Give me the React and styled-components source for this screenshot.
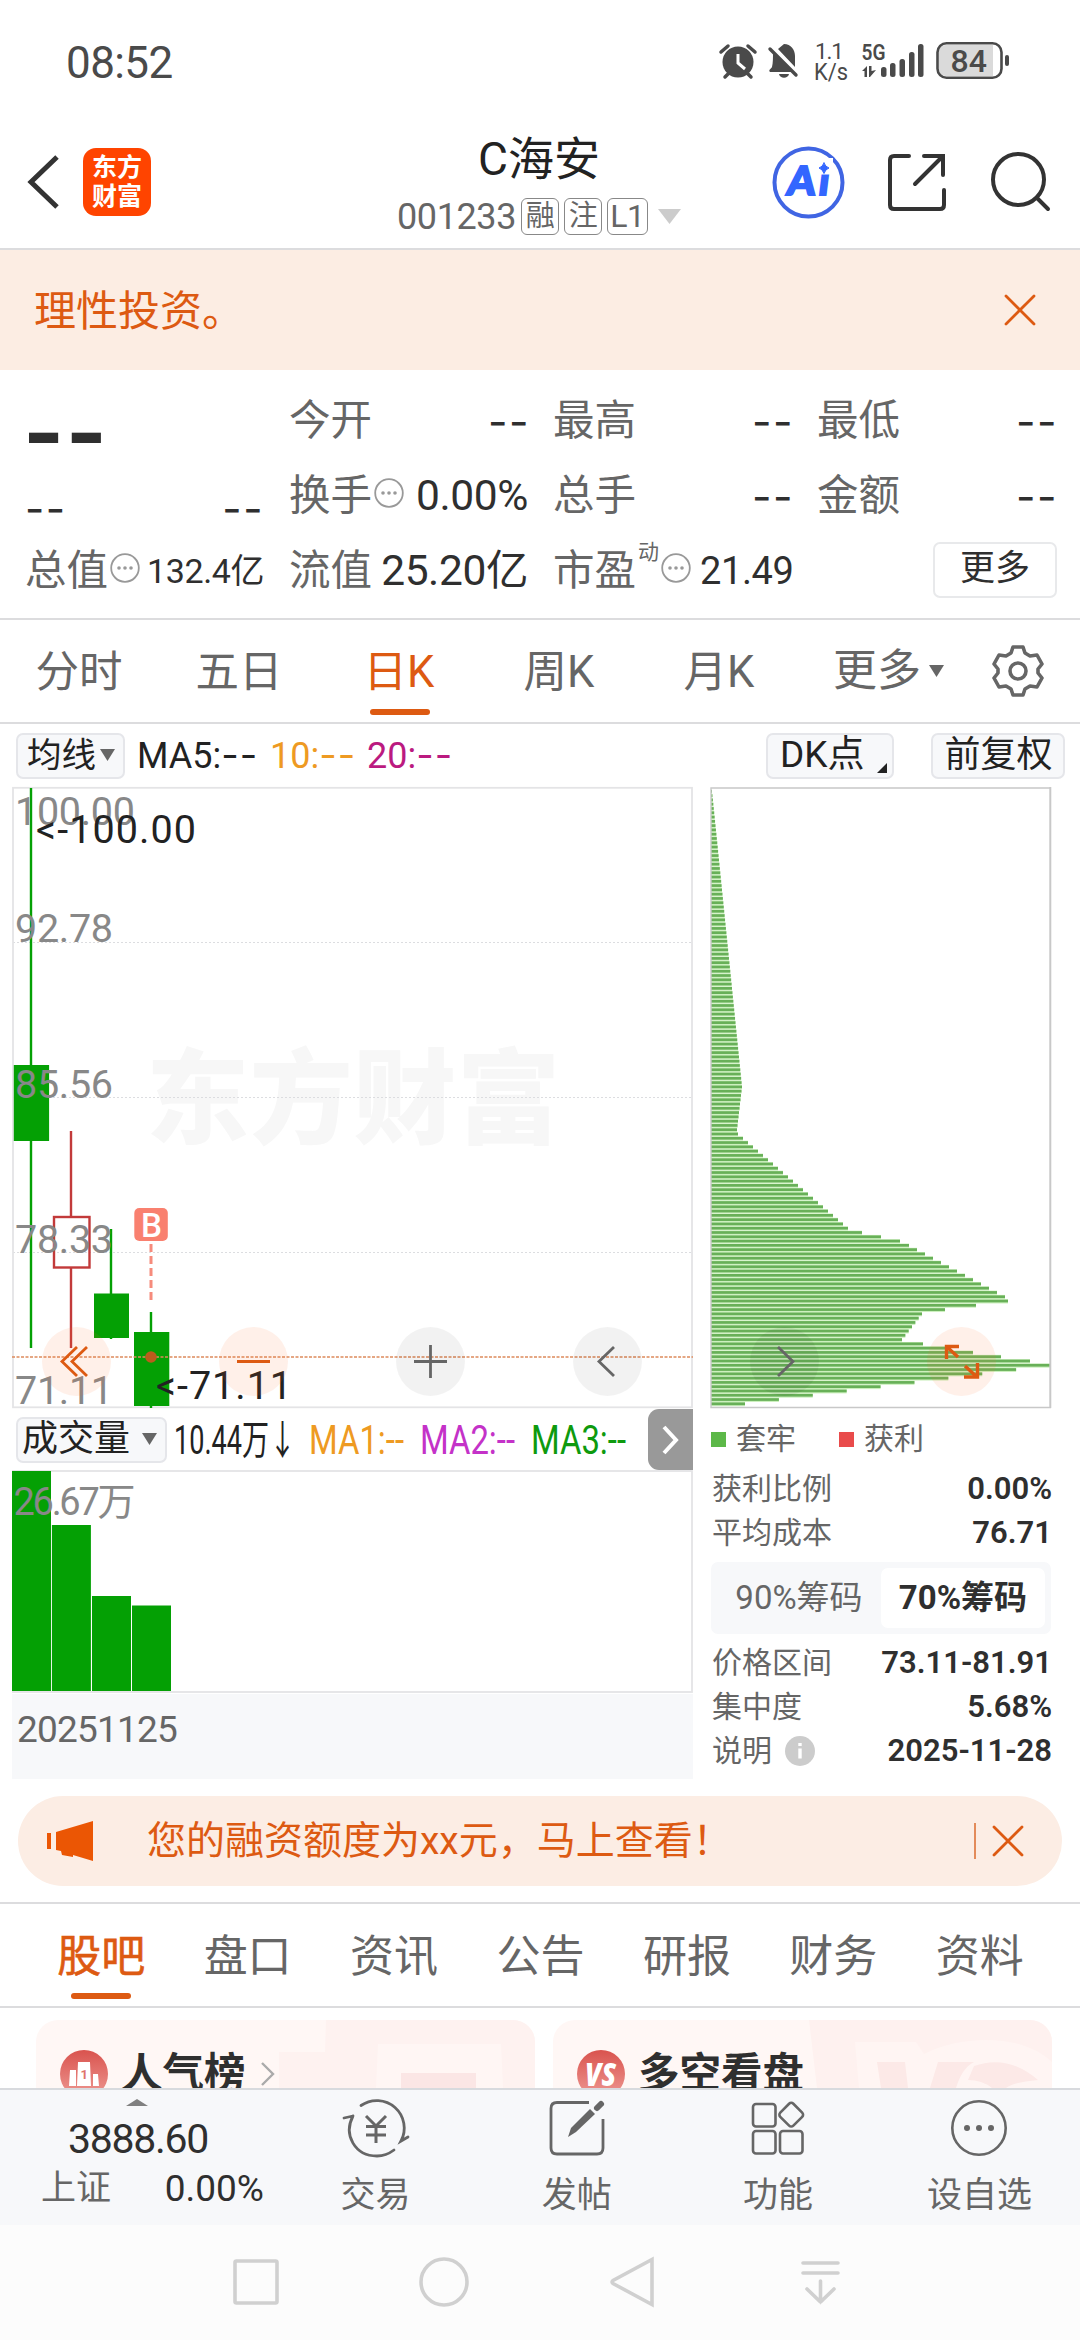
import React, { useState } from 'react';
import styled, { createGlobalStyle, css } from 'styled-components';

const orange = '#dd5a12';
const dark = '#2f2f2f';
const grey = '#666';
const green = '#04a004';

const GlobalStyle = createGlobalStyle`
    * {
        box-sizing: border-box;
    }
    body {
        margin: 0;
        background: #fff;
        font-family: Roboto, "Noto Sans CJK SC", sans-serif;
        color: ${dark};
    }
    svg {
        display: block;
        flex: none;
        overflow: visible;
    }
    svg text {
        white-space: pre;
    }
`;

//Data
const quotes = [
    { label: '今开', value: '--' },
    { label: '最高', value: '--' },
    { label: '最低', value: '--' },
    { label: '换手', value: '0.00%', info: true },
    { label: '总手', value: '--' },
    { label: '金额', value: '--' },
];

const periods = ['分时', '五日', '日K', '周K', '月K'];
const sections = ['股吧', '盘口', '资讯', '公告', '研报', '财务', '资料'];

const priceLabels = [
    { text: '100.00', y: 825 },
    { text: '92.78', y: 942 },
    { text: '85.56', y: 1098 },
    { text: '78.33', y: 1253 },
    { text: '71.11', y: 1404 },
];

const volumes = [
    { x: 12, width: 39, y: 1471 },
    { x: 51.9, width: 39, y: 1525 },
    { x: 92, width: 39, y: 1596 },
    { x: 132, width: 39, y: 1605.5 },
];

//Chip distribution, [row, length], rows between two points are interpolated
const chipPoints = [
    [0, 1], [69, 31], [79, 26], [80, 27], [81, 32], [102, 137], [103, 151], [104, 170],
    [105, 189], [106, 198], [118, 294], [119, 297], [120, 265], [121, 234], [122, 211],
    [128, 191], [129, 212], [130, 234], [131, 262], [132, 290], [133, 319], [134, 339],
    [143, 34],
];

const chipRows = [];
for (let i = 1; i < chipPoints.length; i++) {
    const [r0, l0] = chipPoints[i - 1];
    const [r1, l1] = chipPoints[i];
    for (let r = r0; r < r1; r++) {
        chipRows.push(l0 + ((l1 - l0) * (r - r0)) / (r1 - r0));
    }
}
chipRows.push(34);

const App = () => {
    return (
        <Phone>
            <GlobalStyle />
            <StatusBar />
            <Header />
            <RiskBanner>
                <span>理性投资。</span>
                <CloseIcon />
            </RiskBanner>
            <Quotes />
            <PeriodTabs />
            <ChartArea />
            <Notice>
                <svg width="46" height="40" viewBox="0 0 46 40">
                    <path d="M0 12h4v16H0zM9 11 46 0v40L26 34v2l-11-2-1-4-5-1z" fill="#eb5604" />
                </svg>
                <NoticeText>您的融资额度为xx元，马上查看！</NoticeText>
                <NoticeLine />
                <CloseIcon />
            </Notice>
            <SectionTabs />
            <Cards />
            <Toolbar />
            <NavBar />
        </Phone>
    );
};

const CloseIcon = () => (
    <svg width="32" height="32" viewBox="0 0 32 32" stroke={orange} strokeWidth="2.8" strokeLinecap="round">
        <path d="M2 2l28 28M30 2 2 30" />
    </svg>
);

//Status bar
const StatusBar = () => (
    <Status>
        <Clock>08:52</Clock>
        <svg width="292" height="40" viewBox="719 41 292 40" fill="#4a4a4a">
            <g>
                <circle cx="738" cy="62" r="15.5" />
                <path d="M721 52l7-6M755 52l-7-6M725 77l4-4M751 77l-4-4" stroke="#4a4a4a" strokeWidth="3.5" strokeLinecap="round" />
                <path d="M738 54v9l7 6" fill="none" stroke="#fff" strokeWidth="3" />
            </g>
            <g>
                <path d="M773 52l19 20h-22c-2-2 1-3 2-5 1-4 1-10 1-15z" />
                <path d="M778 49c2-2 4-3 6-5 7 0 11 6 11 12v11z" />
                <path d="M779 74h10c-1 5-9 5-10 0z" />
                <path d="M770 49l26 26" stroke="#4a4a4a" strokeWidth="3.4" strokeLinecap="round" />
            </g>
            <text x="815" y="59" fontSize="22.5" textLength="29">1.1</text>
            <text x="814" y="80" fontSize="23" textLength="34" lengthAdjust="spacingAndGlyphs">K/s</text>
            <text x="861.5" y="59.5" fontSize="22" fontWeight="600" textLength="24" lengthAdjust="spacingAndGlyphs">5G</text>
            <path d="M862 71l5-5v11h-2.500v-6zM869 66h2.500v5l4.500-1-6 7h-1z" />
            <rect x="881" y="67" width="5.500" height="10" rx="2.500" />
            <rect x="890" y="63" width="5.500" height="14" rx="2.500" />
            <rect x="899.500" y="59" width="5.500" height="18" rx="2.500" />
            <rect x="909" y="52" width="5.500" height="25" rx="2.500" />
            <rect x="918" y="44" width="5.500" height="33" rx="2.500" />
            <path d="M946 45h47v31h-47q-7 0-7-7V52q0-7 7-7z" fill="#dadada" />
            <rect x="937.500" y="43.300" width="64" height="34.500" rx="9" fill="none" stroke="#4a4a4a" strokeWidth="2.600" />
            <rect x="1005" y="55" width="4" height="11" rx="2" />
            <text x="950.500" y="72" fontSize="32" fontWeight="500">84</text>
        </svg>
    </Status>
);

//Header
const Header = () => (
    <HeaderBar>
        <HeaderSide>
            <svg width="32" height="54" viewBox="0 0 32 54" fill="none" stroke="#333" strokeWidth="5">
                <path d="M30 2 4 27l26 25" />
            </svg>
            <Logo>
                <span>东方</span>
                <span>财富</span>
            </Logo>
        </HeaderSide>
        <HeaderTitle>
            <StockName>C海安</StockName>
            <StockCode>
                <span>001233</span>
                <Tag>融</Tag>
                <Tag>注</Tag>
                <Tag $wide>L1</Tag>
                <svg width="23" height="15" viewBox="0 0 23 15">
                    <path d="M0 0h23L11.500 15z" fill="#ccc" />
                </svg>
            </StockCode>
        </HeaderTitle>
        <svg width="280" height="76" viewBox="771 144 280 76" fill="none" strokeLinecap="round">
            <circle cx="808.500" cy="182.500" r="34" stroke="#4065e3" strokeWidth="4" />
            <g transform="translate(786 195) skewX(-7)">
                <text x="0" y="0" fontSize="40" fontFamily="Lato" fontWeight="900" fill="#3366ff" stroke="#3366ff" strokeWidth="2" textLength="42">Ai</text>
            </g>
            <path d="M818 158h15v16.500h-15z" fill="#fff" />
            <path d="M824 163q1.500 4 5 5-3.500 1-5 5.500-1.500-4.500-5-5.500 3.500-1 5-5z" fill="#3366ff" stroke="#3366ff" />
            <path d="M909 156h-15q-4 0-4 4v45q0 4 4 4h46q4 0 4-4v-15M924 156h19v19M941 158l-26 26" stroke="#333" strokeWidth="4" />
            <circle cx="1018.500" cy="179.500" r="25.500" stroke="#333" strokeWidth="4" />
            <path d="M1037 198l11 11" stroke="#333" strokeWidth="4" />
        </svg>
    </HeaderBar>
);

//Quotes
const InfoDots = () => (
    <svg width="30" height="30" viewBox="0 0 30 30" fill="#999">
        <circle cx="15" cy="15" r="13.800" fill="none" stroke="#999" strokeWidth="1.800" />
        <circle cx="9" cy="15" r="1.800" />
        <circle cx="15" cy="15" r="1.800" />
        <circle cx="21" cy="15" r="1.800" />
    </svg>
);

const Quotes = () => (
    <QuotePanel>
        <Price>--</Price>
        {quotes.slice(0, 3).map((quote) => (
            <Quote key={quote.label} {...quote} />
        ))}
        <Change>
            <span>--</span>
            <span>--</span>
        </Change>
        {quotes.slice(3).map((quote) => (
            <Quote key={quote.label} {...quote} />
        ))}
        <QuoteCell>
            <QuoteLabel>总值</QuoteLabel>
            <InfoDots />
            <QuoteValue $small>132.4亿</QuoteValue>
        </QuoteCell>
        <QuoteCell>
            <QuoteLabel>流值</QuoteLabel>
            <QuoteValue>25.20亿</QuoteValue>
        </QuoteCell>
        <QuoteCell>
            <QuoteLabel>市盈</QuoteLabel>
            <Sup>动</Sup>
            <InfoDots />
            <QuoteValue $ratio>21.49</QuoteValue>
        </QuoteCell>
        <MoreButton>更多</MoreButton>
    </QuotePanel>
);

const Quote = ({ label, value, info }) => (
    <QuoteCell>
        <QuoteLabel>{label}</QuoteLabel>
        {info && <InfoDots />}
        <QuoteValue $dash={value === '--'}>{value}</QuoteValue>
    </QuoteCell>
);

//Period tabs
const PeriodTabs = () => {
    const [active, setActive] = useState('日K');
    return (
        <PeriodBar>
            {periods.map((name) => (
                <Period key={name} $active={name === active} onClick={() => setActive(name)}>
                    {name}
                </Period>
            ))}
            <PeriodMore>
                更多
                <Down />
            </PeriodMore>
            <svg width="54" height="54" viewBox="0 0 54 54" fill="none" stroke={grey} strokeWidth="3.600" strokeLinejoin="round">
                <path d="M22 3h10l2 6 5 3 7-1 5 9-4 5v4l4 5-5 9-7-1-5 3-2 6H22l-2-6-5-3-7 1-5-9 4-5v-4l-4-5 5-9 7 1 5-3z" />
                <circle cx="27" cy="27" r="8" />
            </svg>
        </PeriodBar>
    );
};

//Charts
const KLine = () => (
    <svg width="681" height="622" viewBox="12 787 681 622">
        <text x="146" y="1136" fontSize="103" fontWeight="900" fill="#f7f7f7" textLength="414">东方财富</text>
        <g stroke="#dcdde0" strokeDasharray="2 2">
            <path d="M13 942.500h679M13 1097.500h679M13 1252.500h679" />
        </g>
        <rect x="13" y="787.800" width="679" height="619.500" fill="none" stroke="#e4e4e6" strokeWidth="1.800" />
        <g fill={green} stroke={green}>
            <path d="M31 788v560M111 1229v110M151 1312v96" strokeWidth="2.400" />
            <path d="M13.800 1065h35.300v76H13.800zM94 1293.500h35v44.500H94zM134 1332h35.300v74H134z" stroke="none" />
        </g>
        <g fill="none" stroke="#c23a3a" strokeWidth="2.400">
            <path d="M71 1131v86M71 1268v80" />
            <rect x="54" y="1217" width="35.500" height="50.500" />
        </g>
        <path d="M12 1357h681" stroke="#dd8a5c" strokeWidth="1.600" strokeDasharray="3 1.500" />
        <circle cx="151" cy="1357" r="5.800" fill="#bb5c1c" />
        <rect x="134.300" y="1208" width="33.500" height="33" rx="5" fill="#f9806f" />
        <text x="141" y="1237" fontSize="34" fontWeight="500" fill="#fff" textLength="21" lengthAdjust="spacingAndGlyphs">B</text>
        <path d="M151 1244v57" stroke="#f68b7c" strokeWidth="3" strokeDasharray="8 4" />
        <g fontSize="39.500" fill="#888" letterSpacing="-0.3">
            {priceLabels.map((label) => (
                <text key={label.text} x="15" y={label.y}>{label.text}</text>
            ))}
        </g>
        <g fontSize="39.500" fill="#222">
            <text x="36" y="843" textLength="160">&lt;-100.00</text>
            <text x="156" y="1399" textLength="136">&lt;-71.11</text>
        </g>
    </svg>
);

const Chips = () => (
    <svg width="342" height="622" viewBox="710 787 342 622">
        {chipRows.map((length, i) => (
            <g key={i}>
                <rect x="711" y={789.5 + i * 4.283} width={length} height="4.300" fill="#cdf0bf" />
                <rect x="711" y={790 + i * 4.283} width={length} height="2.700" fill="#68b058" />
            </g>
        ))}
        <path d="M1051 788H711v619.500h340" fill="none" stroke="#c8c8c8" strokeWidth="1.400" />
        <path d="M1050.300 787v621" stroke="#c8c8c8" strokeWidth="2" />
    </svg>
);

const Volume = () => (
    <svg width="681" height="223" viewBox="12 1470 681 223">
        <rect x="13" y="1471" width="679" height="221" fill="none" stroke="#e4e4e6" strokeWidth="1.800" />
        {volumes.map((bar) => (
            <rect key={bar.x} x={bar.x} y={bar.y} width={bar.width} height={1691 - bar.y} fill={green} />
        ))}
        <text x="13.500" y="1514.500" fontSize="38" fill="#888" textLength="122">26.67万</text>
    </svg>
);

const Down = () => (
    <svg width="15" height="12" viewBox="0 0 15 12">
        <path d="M0 0h15L7.500 12z" fill={grey} />
    </svg>
);

const ChartArea = () => (
    <>
        <ChartHead>
            <Pill $width={109}>均线<Down /></Pill>
            <Average $color="#222" $width={133}>MA5:<Dash>--</Dash></Average>
            <Average $color="#ee9a22" $width={97}>10:<Dash>--</Dash></Average>
            <Average $color="#bb1a80" $width={84}>20:<Dash>--</Dash></Average>
            <Spacer />
            <Pill $width={128} $mark>
                DK点
                <Corner />
            </Pill>
            <Pill $width={134} $last>前复权</Pill>
        </ChartHead>
        <ChartBody>
            <div>
                <KLine />
                <VolumeHead>
                    <Pill $width={151} $wide>成交量<Down /></Pill>
                    <Squeezed $color="#222" $width={135}>
                        <text x="0" y="41" textLength="122" lengthAdjust="spacingAndGlyphs">10.44万↓</text>
                    </Squeezed>
                    <Squeezed $color="#ee9a22" $width={111}>
                        <text x="0" y="41" textLength="95" lengthAdjust="spacingAndGlyphs">MA1:--</text>
                    </Squeezed>
                    <Squeezed $color="#c432c8" $width={111}>
                        <text x="0" y="41" textLength="95" lengthAdjust="spacingAndGlyphs">MA2:--</text>
                    </Squeezed>
                    <Squeezed $color="#0e9a0e" $width={100}>
                        <text x="0" y="41" textLength="95" lengthAdjust="spacingAndGlyphs">MA3:--</text>
                    </Squeezed>
                    <NextTab>
                        <svg width="17" height="30" viewBox="0 0 17 30" fill="none" stroke="#fff" strokeWidth="4">
                            <path d="M2 2l12 13L2 28" />
                        </svg>
                    </NextTab>
                </VolumeHead>
                <Volume />
                <DateStrip>20251125</DateStrip>
            </div>
            <ChipPanel>
                <Chips />
                <Legend>
                    <Square $color="#5cb848" />
                    <span>套牢</span>
                    <Square $color="#e94b4b" />
                    <span>获利</span>
                </Legend>
                <ChipRow><span>获利比例</span><b>0.00%</b></ChipRow>
                <ChipRow><span>平均成本</span><b>76.71</b></ChipRow>
                <Segment>
                    <SegmentItem>90%筹码</SegmentItem>
                    <SegmentItem $active>70%筹码</SegmentItem>
                </Segment>
                <ChipRow><span>价格区间</span><b>73.11-81.91</b></ChipRow>
                <ChipRow><span>集中度</span><b>5.68%</b></ChipRow>
                <ChipRow>
                    <span>说明</span>
                    <svg width="30" height="30" viewBox="0 0 30 30">
                        <circle cx="15" cy="15" r="15" fill="#ccc" />
                        <path d="M15 12.500v10M15 7v3" stroke="#fff" strokeWidth="3.400" />
                    </svg>
                    <b>2025-11-28</b>
                </ChipRow>
            </ChipPanel>
            <ChartControls>
                <Control $warm>
                    <path d="M35 20 20 34.500 35 49M45 20 30 34.500 45 49" />
                </Control>
                <Control $warm>
                    <path d="M18 34.500h33" />
                </Control>
                <Control>
                    <path d="M18 34.500h33M34.500 18v33" />
                </Control>
                <Control>
                    <path d="M41 20 26 34.500 41 49" />
                </Control>
                <Control>
                    <path d="M28 20 43 34.500 28 49" />
                </Control>
                <Control $warm>
                    <path d="M32 19.500H19.500V32M20 20l11 10M37 50h13.500V36M50 50 38 39" strokeWidth="3.400" />
                </Control>
            </ChartControls>
        </ChartBody>
    </>
);

const Control = ({ $warm, children }) => (
    <ControlCircle $warm={$warm}>
        <svg width="69" height="69" viewBox="0 0 69 69" fill="none" strokeWidth="2.800">
            {children}
        </svg>
    </ControlCircle>
);

//Section tabs and cards
const SectionTabs = () => {
    const [active, setActive] = useState('股吧');
    return (
        <SectionBar>
            {sections.map((name) => (
                <Section key={name} $active={name === active} onClick={() => setActive(name)}>
                    {name}
                </Section>
            ))}
        </SectionBar>
    );
};

const Cards = () => (
    <CardRow>
        <Card>
            <CardArt width="499" height="68" viewBox="36 2020 499 68">
                <path d="M326 2020h209v68H279v-36h46z" fill="#fef2f0" />
                <path d="M378 2044h123l2 44H376z" fill="#fff6f4" />
                <path d="M401 2073h75v15h-75z" fill="#fbe6e5" />
            </CardArt>
            <svg width="48" height="48" viewBox="0 0 48 48">
                <RedFill />
                <circle cx="24" cy="24" r="24" fill="url(#red)" />
                <path d="M10 20h6v16H9zM18 12h12l1 24H17zM33 24h5l1 12h-6z" fill="#fff" />
                <text x="20.500" y="29" fontSize="13" fontWeight="700" fill="#e0736c">1</text>
            </svg>
            <CardTitle>人气榜</CardTitle>
            <svg width="14" height="24" viewBox="0 0 14 24" fill="none" stroke="#aaa" strokeWidth="2.400">
                <path d="M1 1l11 11L1 23" />
            </svg>
        </Card>
        <Card>
            <CardArt width="499" height="68" viewBox="553 2020 499 68">
                <path d="M809 2020h243v68H817z" fill="#fef1ef" />
                <path d="M855 2042h61l8 12q28-14 62-14 42 0 66 22v26H859z" fill="#fff5f3" />
                <path d="M877 2062h28l3 26h-27zM938 2062h36q-12 6-18 26h-26zM974 2066q34-12 64 14-24 2-32 8h-14q-10-8-24-8z" fill="#fce9e7" />
            </CardArt>
            <svg width="48" height="48" viewBox="0 0 48 48">
                <circle cx="24" cy="24" r="24" fill="url(#red)" />
                <text x="8" y="36" fontSize="32" fontFamily="Open Sans" fontWeight="800" fontStyle="italic" fill="#fff" textLength="31" lengthAdjust="spacingAndGlyphs">VS</text>
            </svg>
            <CardTitle>多空看盘</CardTitle>
        </Card>
    </CardRow>
);

const RedFill = () => (
    <defs>
        <linearGradient id="red" x1="0" y1="0" x2="0" y2="1">
            <stop offset="0" stopColor="#d9534e" />
            <stop offset="1" stopColor="#ee9993" />
        </linearGradient>
    </defs>
);

//Bottom bars
const Toolbar = () => (
    <BottomBar>
        <IndexBox>
            <svg width="22" height="7" viewBox="0 0 22 7">
                <path d="M11 0 22 7H0z" fill="#808080" />
            </svg>
            <IndexValue>3888.60</IndexValue>
            <IndexRow>
                <span>上证</span>
                <b>0.00%</b>
            </IndexRow>
        </IndexBox>
        <Tool>
            <svg width="66" height="58" viewBox="0 0 66 58" fill="none" stroke={grey} strokeWidth="2.800" strokeLinecap="round">
                <path d="M18 6.500A27.500 27.500 0 0 1 58 42l7-4M10 17 1 19M10 17C0 36 12 57 34 57q9 0 17-6" />
                <path d="M23 17l10 10 10-10M33 27v17M23 27.500h20M23 36h20" strokeWidth="3" strokeLinecap="butt" />
            </svg>
            <span>交易</span>
        </Tool>
        <Tool>
            <svg width="58" height="58" viewBox="0 0 58 58" fill="none" stroke={grey} strokeWidth="2.800">
                <path d="M41 3.500H9q-6 0-6 6V49q0 6 6 6h40q6 0 6-6V20" />
                <path d="M20 38l3-9 19-19 5 5-19 18z" fill={grey} stroke="none" />
                <path d="M49 9l4-4" strokeWidth="6" strokeLinecap="round" />
            </svg>
            <span>发帖</span>
        </Tool>
        <Tool>
            <svg width="58" height="58" viewBox="0 0 58 58" fill="none" stroke={grey} strokeWidth="2.600">
                <rect x="4" y="5" width="22.500" height="22.500" rx="3" />
                <rect x="4" y="32" width="22.500" height="22.500" rx="3" />
                <rect x="31" y="32" width="22.500" height="22.500" rx="3" />
                <rect x="33" y="6.500" width="18.500" height="18.500" rx="3" transform="rotate(45 42.300 15.700)" />
            </svg>
            <span>功能</span>
        </Tool>
        <Tool>
            <svg width="58" height="58" viewBox="0 0 58 58" fill={grey}>
                <circle cx="29" cy="29" r="26.700" fill="none" stroke={grey} strokeWidth="2.600" />
                <circle cx="17" cy="29" r="3" />
                <circle cx="29" cy="29" r="3" />
                <circle cx="41" cy="29" r="3" />
            </svg>
            <span>设自选</span>
        </Tool>
    </BottomBar>
);

const NavBar = () => (
    <Nav>
        <svg width="52" height="52" viewBox="0 0 52 52">
            <rect x="5" y="5" width="42" height="42" rx="1.500" />
        </svg>
        <svg width="52" height="52" viewBox="0 0 52 52">
            <circle cx="26" cy="26" r="23" />
        </svg>
        <svg width="52" height="52" viewBox="0 0 52 52">
            <path d="M45 3.500v45L6 27.500q-2-1.500 0-3z" />
        </svg>
        <svg width="52" height="52" viewBox="0 0 52 52" strokeLinecap="round">
            <path d="M8 7h35M8 17h35M25.500 25v21M12 33l13.500 13L39 33" />
        </svg>
    </Nav>
);

const Phone = styled.div`
    width: 1080px;
    height: 2340px;
    overflow: hidden;
    background: #fff;
`;

const Status = styled.div`
    display: flex;
    justify-content: space-between;
    align-items: center;
    height: 122px;
    padding: 0 69px 0 66px;
`;
const Clock = styled.span`
    font-size: 44px;
    letter-spacing: -0.6px;
    color: #4a4a4a;
    line-height: 50px;
    margin-top: 4px;
`;

const HeaderBar = styled.header`
    display: grid;
    grid-template-columns: 280px 1fr 280px;
    align-items: center;
    height: 128px;
    padding: 0 29px 0 27px;
    border-bottom: 2px solid #dcdcde;
`;
const HeaderSide = styled.div`
    display: flex;
    align-items: center;
    gap: 24px;
    margin-top: -6px;
    & + div + svg {
        margin-top: -6px;
    }
`;
const Logo = styled.div`
    display: flex;
    flex-direction: column;
    align-items: center;
    justify-content: center;
    width: 68px;
    height: 68px;
    border-radius: 13px;
    background: #ff4400;
    color: #fff;
    font-size: 25px;
    font-weight: 700;
    line-height: 29px;
`;
const HeaderTitle = styled.div`
    display: flex;
    flex-direction: column;
    align-items: center;
    padding-top: 2px;
`;
const StockName = styled.div`
    font-size: 46px;
    line-height: 54px;
    color: #222;
`;
const StockCode = styled.div`
    display: flex;
    align-items: center;
    gap: 5px;
    height: 54px;
    padding-top: 7px;
    font-size: 36px;
    letter-spacing: -0.4px;
    color: ${grey};
    svg {
        margin-left: 5px;
    }
`;
const Tag = styled.span`
    display: flex;
    justify-content: center;
    width: ${(props) => (props.$wide ? 41 : 38)}px;
    height: 37px;
    border: 1.500px solid #888;
    border-radius: 6px;
    font-size: ${(props) => (props.$wide ? 32 : 29)}px;
    line-height: 34px;
`;

const RiskBanner = styled.div`
    display: flex;
    align-items: center;
    justify-content: space-between;
    height: 120px;
    padding: 0 44px 0 34px;
    background: #fcede3;
    color: ${orange};
    font-size: 42px;
    line-height: 50px;
    span {
        padding-top: 3px;
    }
`;

const QuotePanel = styled.div`
    display: grid;
    grid-template-columns: repeat(4, 237px);
    grid-template-rows: repeat(3, 75px);
    column-gap: 27px;
    height: 250px;
    padding: 13px 0 0 25px;
    border-bottom: 2px solid #dcdcde;
`;
const dashes = css`
    font-family: Inter, sans-serif;
    letter-spacing: 1.5px;
`;
const Price = styled.div`
    ${dashes}
    font-size: 88px;
    font-weight: 700;
    line-height: 75px;
    padding-top: 12px;
    margin-left: -2px;
`;
const Change = styled.div`
    ${dashes}
    display: flex;
    justify-content: space-between;
    margin-right: -2px;
    font-size: 42px;
    line-height: 75px;
    padding-top: 13px;
`;
const QuoteCell = styled.div`
    display: flex;
    align-items: center;
    height: 75px;
    svg {
        margin: -6px 0 0 2px;
    }
`;
const QuoteLabel = styled.span`
    flex: none;
    font-size: 41.500px;
    line-height: 60px;
    color: ${grey};
`;
const QuoteValue = styled.span`
    margin-left: ${(props) => (props.$ratio ? '9px' : 'auto')};
    margin-right: -2px;
    font-size: ${(props) => (props.$small ? 34 : 42.5)}px;
    letter-spacing: -0.4px;
    line-height: 60px;
    white-space: nowrap;
    ${(props) => props.$ratio && 'font-size: 38px;'}
    ${(props) => props.$dash && dashes}
    ${(props) => props.$dash && 'margin-right: -4px; padding-top: 2px;'}
`;
const Sup = styled.span`
    flex: none;
    font-size: 21px;
    line-height: 24px;
    color: ${grey};
    margin: -37px 0 0 2px;
`;
const MoreButton = styled.button`
    justify-self: end;
    align-self: center;
    width: 124px;
    height: 56px;
    padding: 0 0 3px;
    margin: -1px -3px 0 0;
    border: 2px solid #e8e9eb;
    border-radius: 7px;
    background: #fff;
    color: ${dark};
    font: 35px/49px Roboto, "Noto Sans CJK SC", sans-serif;
`;

const PeriodBar = styled.nav`
    display: flex;
    align-items: center;
    height: 104px;
    border-bottom: 2px solid #dcdcde;
`;
const underline = css`
    color: ${orange};
    &::after {
        content: '';
        position: absolute;
        left: calc(50% - 30px);
        bottom: 7px;
        width: 60px;
        height: 6px;
        border-radius: 3px;
        background: ${orange};
    }
`;
const Period = styled.div`
    position: relative;
    width: 160px;
    height: 102px;
    padding-right: 2px;
    line-height: 106px;
    text-align: center;
    font-size: 43.500px;
    color: ${grey};
    ${(props) => props.$active && underline}
`;
const PeriodMore = styled.div`
    display: flex;
    align-items: center;
    gap: 8px;
    margin: 0 47px 0 33px;
    font-size: 44px;
    line-height: 106px;
    color: ${grey};
`;

const ChartHead = styled.div`
    display: flex;
    align-items: center;
    height: 63px;
    padding: 0 15px 0 16px;
`;
const Pill = styled.div`
    position: relative;
    display: flex;
    align-items: center;
    justify-content: space-between;
    width: ${(props) => props.$width}px;
    height: 46px;
    padding: ${(props) => (props.$wide ? '0 8px 2px 4px' : '0 8px 2px 9px')};
    border: 2px solid #e5e6ea;
    border-radius: 7px;
    background: #f7f8fa;
    color: #222;
    font-size: ${(props) => (props.$wide ? 36 : 34.5)}px;
    line-height: 42px;
    white-space: nowrap;
    ${(props) => props.$mark && 'padding-left: 12px; font-size: 37px;'}
    ${(props) => props.$last && 'margin-left: 37px; justify-content: center; font-size: 36px;'}
`;
const Corner = styled.i`
    position: absolute;
    right: 5px;
    bottom: 4px;
    border: 5.500px solid #222;
    border-top-color: transparent;
    border-left-color: transparent;
`;
const Average = styled.span`
    width: ${(props) => props.$width}px;
    transform: translateX(12px);
    color: ${(props) => props.$color};
    font-size: 36px;
    line-height: 46px;
    white-space: nowrap;
`;
const Dash = styled.span`
    font-family: Inter, sans-serif;
    font-size: 38px;
    letter-spacing: 1px;
    line-height: 1px;
`;
const Spacer = styled.div`
    flex: 1;
`;
const ChartBody = styled.div`
    position: relative;
    display: flex;
    gap: 17px;
    height: 1009px;
    padding-left: 12px;
`;
const VolumeHead = styled.div`
    display: flex;
    align-items: center;
    height: 61px;
    padding-left: 4px;
`;
const Squeezed = styled.svg.attrs({ height: 54 })`
    width: ${(props) => props.$width}px;
    margin-left: ${(props) => (props.$color === '#222' ? 7 : 0)}px;
    fill: ${(props) => props.$color};
    font-size: 40px;
`;
const NextTab = styled.div`
    display: flex;
    align-items: center;
    justify-content: center;
    width: 45px;
    height: 61px;
    margin-left: auto;
    border-radius: 11px 0 0 11px;
    background: #999;
`;
const DateStrip = styled.div`
    width: 681px;
    height: 85px;
    margin-top: 1px;
    padding-left: 5px;
    background: #f7f8fa;
    color: ${grey};
    font-size: 37px;
    letter-spacing: -0.8px;
    line-height: 72px;
`;

const ChipPanel = styled.div`
    width: 342px;
    color: ${grey};
    font-size: 30px;
`;
const Legend = styled.div`
    display: flex;
    align-items: center;
    height: 58px;
    padding: 4px 0 0 1px;
    i {
        margin-top: -1px;
    }
    span {
        margin: -2px 43px 0 10px;
        line-height: 40px;
    }
`;
const Square = styled.i`
    width: 15px;
    height: 15px;
    background: ${(props) => props.$color};
`;
const ChipRow = styled.div`
    display: flex;
    align-items: center;
    height: 44px;
    padding-left: 2px;
    line-height: 44px;
    svg {
        margin-left: 13px;
    }
    b {
        margin-left: auto;
        font-size: 31px;
        font-weight: 600;
        color: ${dark};
    }
`;
const Segment = styled.div`
    display: flex;
    height: 72px;
    width: 340px;
    margin: 7px 0 7px 1px;
    padding: 6px;
    border-radius: 7px;
    background: #f7f8fa;
`;
const SegmentItem = styled.div`
    width: 164px;
    border-radius: 7px;
    text-align: center;
    font-size: 33px;
    line-height: 59px;
    ${(props) => props.$active && 'background: #fff; color: #2f2f2f; font-weight: 700;'}
`;

const ChartControls = styled.div`
    position: absolute;
    left: 42px;
    top: 540px;
    display: flex;
    justify-content: space-between;
    width: 954px;
`;
const ControlCircle = styled.div`
    width: 69px;
    height: 69px;
    border-radius: 50%;
    background: ${(props) => (props.$warm ? 'rgba(255, 110, 40, 0.1)' : 'rgba(0, 0, 0, 0.05)')};
    stroke: ${(props) => (props.$warm ? orange : grey)};
`;

const Notice = styled.div`
    display: flex;
    align-items: center;
    height: 90px;
    margin: 0 18px;
    padding: 0 38px 0 29px;
    border-radius: 45px;
    background: #fcede4;
    color: ${orange};
`;
const NoticeText = styled.span`
    flex: 1;
    margin: -1px 0 0 54px;
    font-size: 39px;
    line-height: 50px;
    white-space: nowrap;
`;
const NoticeLine = styled.i`
    width: 2px;
    height: 36px;
    margin-right: 16px;
    background: #e38b5a;
`;

const SectionBar = styled.nav`
    display: flex;
    height: 106px;
    margin-top: 16px;
    padding: 0 27px 0 28px;
    border-top: 2px solid #dcdcde;
    border-bottom: 2px solid #dcdcde;
`;
const Section = styled.div`
    position: relative;
    flex: 1;
    height: 102px;
    text-align: center;
    font-size: 44px;
    line-height: 107px;
    color: ${grey};
    ${(props) => props.$active && underline}
    ${(props) => props.$active && `-webkit-text-stroke: 0.600px ${orange};`}
`;

const CardRow = styled.div`
    display: flex;
    gap: 18px;
    height: 80px;
    padding: 12px 27px 0 36px;
    overflow: hidden;
`;
const Card = styled.div`
    position: relative;
    display: flex;
    align-items: center;
    width: 499px;
    height: 108px;
    padding-left: 24px;
    border-radius: 22px;
    overflow: hidden;
    background: #fff7f5;
    > * {
        position: relative;
    }
`;
const CardArt = styled.svg`
    && {
        position: absolute;
        left: 0;
        top: 0;
    }
`;
const CardTitle = styled.span`
    margin: -1px 15px 0 13px;
    font-size: 41.500px;
    font-weight: 700;
    line-height: 50px;
`;

const BottomBar = styled.div`
    display: flex;
    position: relative;
    height: 137px;
    border-top: 2px solid #d8dade;
    background: #f7f8fa;
`;
const IndexBox = styled.div`
    display: flex;
    flex-direction: column;
    align-items: center;
    width: 275px;
    padding-top: 9px;
`;
const IndexValue = styled.div`
    margin: 8px 0 0 1px;
    font-size: 41px;
    letter-spacing: -1.3px;
    line-height: 50px;
`;
const IndexRow = styled.div`
    display: flex;
    justify-content: space-between;
    width: 223px;
    margin: 1px 0 0 30px;
    color: ${grey};
    font-size: 35px;
    line-height: 48px;
    b {
        color: ${dark};
        font-size: 37px;
        font-weight: 400;
    }
`;
const Tool = styled.div`
    display: flex;
    flex-direction: column;
    align-items: center;
    width: 201.300px;
    padding-top: 9px;
    color: ${grey};
    font-size: 35px;
    line-height: 48px;
    span {
        margin-top: 15px;
    }
`;

const Nav = styled.div`
    display: flex;
    justify-content: space-between;
    height: 116px;
    padding: 31px 233px 0 230px;
    background: #fcfcfc;
    fill: none;
    stroke: #d0d0d0;
    stroke-width: 3.600px;
`;

export default App;
